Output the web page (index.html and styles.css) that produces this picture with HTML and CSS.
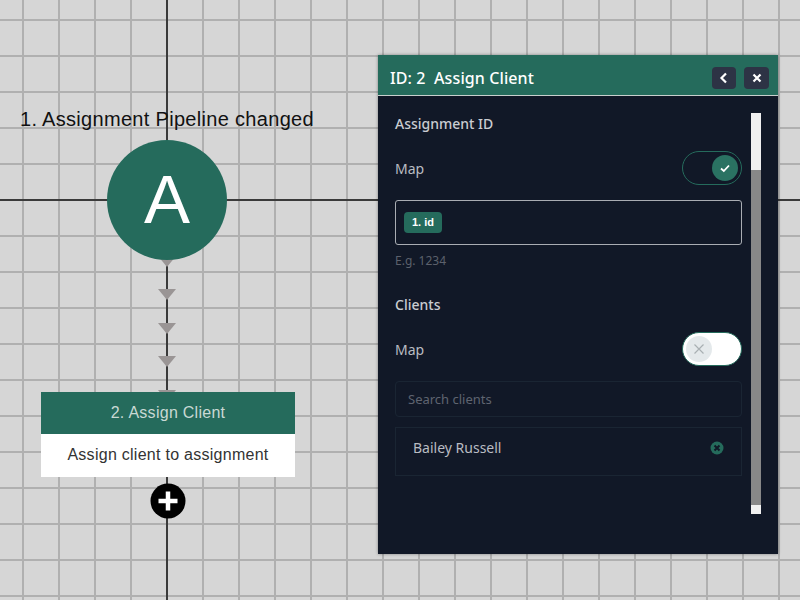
FILE: index.html
```html
<!DOCTYPE html>
<html lang="en">
  <head>
    <meta charset="UTF-8" />
    <meta name="viewport" content="width=device-width, initial-scale=1.0" />
    <title>Assign Client</title>
    <link rel="stylesheet" href="styles.css">
  </head>
  <body>
    <div class="canvas">
      <div class="axis-x"></div>
      <div class="axis-y"></div>

      <div class="arrow arrow-1"></div>
      <div class="arrow arrow-2"></div>
      <div class="arrow arrow-3"></div>
      <div class="arrow arrow-4"></div>
      <div class="arrow arrow-5"></div>

      <div class="trigger-title">1. Assignment Pipeline changed</div>
      <div class="trigger-node">A</div>

      <div class="action-node">
        <div class="action-head">2. Assign Client</div>
        <div class="action-body">Assign client to assignment</div>
      </div>

      <div class="add-node">
        <svg width="36" height="36" viewBox="0 0 36 36">
          <circle cx="18" cy="18" r="17.500" fill="#000" />
          <path d="M18 8.500v19M8.500 18h19" stroke="#fff" stroke-width="4.500" fill="none" />
        </svg>
      </div>

      <div class="panel">
        <div class="panel-head">
          <div class="panel-title">ID: 2&nbsp; Assign Client</div>
          <button class="head-btn" type="button">
            <svg width="12" height="12" viewBox="0 0 12 12">
              <path d="M8 1.500 3.500 6 8 10.500" stroke="#fff" stroke-width="2.200" fill="none" />
            </svg>
          </button>
          <button class="head-btn head-btn-close" type="button">
            <svg width="12" height="12" viewBox="0 0 12 12">
              <path d="M2.500 2.500l7 7M9.500 2.500l-7 7" stroke="#fff" stroke-width="2.200" fill="none" />
            </svg>
          </button>
        </div>

        <div class="panel-body">
          <div class="panel-form">
            <div class="section-title">Assignment ID</div>
            <div class="map-row">
              <span class="map-label">Map</span>
              <div class="toggle toggle-on">
                <span class="knob">
                  <svg width="12" height="12" viewBox="0 0 12 12">
                    <path d="M2 6.500 4.800 9 10 3.500" stroke="#fff" stroke-width="1.800" fill="none" />
                  </svg>
                </span>
              </div>
            </div>
            <div class="map-input"><span class="chip">1. id</span></div>
            <div class="hint">E.g. 1234</div>

            <div class="section-title section-clients">Clients</div>
            <div class="map-row">
              <span class="map-label">Map</span>
              <div class="toggle toggle-off">
                <span class="knob">
                  <svg width="12" height="12" viewBox="0 0 12 12">
                    <path d="M1.500 1.500l9 9M10.500 1.500l-9 9" stroke="#a9b0b3" stroke-width="1.200" fill="none" />
                  </svg>
                </span>
              </div>
            </div>
            <div class="search-box">Search clients</div>
            <div class="client-item">
              <span>Bailey Russell</span>
              <svg width="14" height="14" viewBox="0 0 14 14">
                <circle cx="7" cy="7" r="6.500" fill="#256b5c" />
                <path d="M4.500 4.500l5 5M9.500 4.500l-5 5" stroke="#111827" stroke-width="2" fill="none" />
              </svg>
            </div>
          </div>
          <div class="scrollbar">
            <div class="thumb"></div>
            <div class="track"></div>
            <div class="track-end"></div>
          </div>
        </div>
      </div>
    </div>
  </body>
</html>
```

FILE: styles.css
```css
body {
  margin: 0;
  font-family: "Liberation Sans", Arial, sans-serif;
}
.canvas {
  position: relative;
  width: 800px;
  height: 600px;
  overflow: hidden;
  background-color: #d6d6d6;
  background-image:
    linear-gradient(to right, #b0b0b0 2px, transparent 2px),
    linear-gradient(to bottom, #b0b0b0 2px, transparent 2px);
  background-size: 36px 36px;
  background-position: 22px 19px;
}
.axis-x {
  position: absolute;
  left: 0;
  top: 199px;
  width: 800px;
  height: 2px;
  background: #3a3a3a;
}
.axis-y {
  position: absolute;
  left: 166px;
  top: 0;
  width: 2px;
  height: 600px;
  background: #3a3a3a;
}
.arrow {
  position: absolute;
  left: 158px;
  width: 0;
  height: 0;
  border-left: 9.500px solid transparent;
  border-right: 9.500px solid transparent;
  border-top: 11px solid #9a9595;
}
.arrow-1 { top: 256px; }
.arrow-2 { top: 289px; }
.arrow-3 { top: 323px; }
.arrow-4 { top: 356px; }
.arrow-5 { top: 390px; }
.trigger-title {
  position: absolute;
  left: 20px;
  top: 108px;
  font-size: 20px;
  line-height: 23px;
  letter-spacing: 0.31px;
  color: #111;
  white-space: nowrap;
}
.trigger-node {
  position: absolute;
  left: 107px;
  top: 140px;
  width: 120px;
  height: 120px;
  border-radius: 50%;
  background: #256b5c;
  color: #fff;
  font-size: 69px;
  line-height: 120px;
  text-align: center;
}
.action-node {
  position: absolute;
  left: 41px;
  top: 392px;
  width: 254px;
}
.action-head {
  height: 42px;
  line-height: 41px;
  background: #256b5c;
  color: #c9d9d4;
  font-size: 16px;
  letter-spacing: 0.27px;
  text-align: center;
}
.action-body {
  height: 43px;
  line-height: 42px;
  background: #fff;
  color: #333;
  font-size: 16px;
  letter-spacing: 0.27px;
  text-align: center;
}
.add-node {
  position: absolute;
  left: 150px;
  top: 483px;
  width: 36px;
  height: 36px;
}
.panel {
  position: absolute;
  left: 378px;
  top: 55px;
  width: 400px;
  height: 499px;
  display: flex;
  flex-direction: column;
  background: #111827;
  font-family: "Noto Sans", sans-serif;
  box-shadow: 0 0 3px rgba(0, 0, 0, 0.4);
}
.panel-head {
  box-sizing: border-box;
  display: flex;
  align-items: center;
  gap: 8px;
  height: 41px;
  padding: 5px 9px 0 12px;
  background: #256b5c;
  border-bottom: 1px solid #c8cfcd;
  flex-shrink: 0;
}
.panel-title {
  flex: 1;
  color: #fff;
  font-size: 16px;
  font-weight: 500;
  letter-spacing: 0.1px;
}
.head-btn {
  display: flex;
  align-items: center;
  justify-content: center;
  width: 24px;
  height: 22px;
  padding: 0;
  border: none;
  border-radius: 4px;
  background: #2d3345;
}
.head-btn-close {
  width: 25px;
}
.panel-body {
  display: flex;
  flex: 1;
  padding: 16px 17px 0;
}
.panel-form {
  width: 347px;
}
.section-title {
  color: #c9ccd1;
  font-size: 14px;
  font-weight: 500;
  line-height: 24px;
}
.section-clients {
  margin-top: 24px;
}
.map-row {
  display: flex;
  align-items: center;
  justify-content: space-between;
  margin-top: 15px;
  height: 34px;
}
.map-label {
  color: #b9bcc2;
  font-size: 14px;
}
.toggle {
  box-sizing: border-box;
  display: flex;
  align-items: center;
  width: 60px;
  height: 34px;
  padding: 0 3px;
  border: 1px solid #256b5c;
  border-radius: 17px;
}
.toggle-on {
  justify-content: flex-end;
}
.toggle-off {
  background: #fff;
}
.knob {
  display: flex;
  align-items: center;
  justify-content: center;
  width: 26px;
  height: 26px;
  border-radius: 50%;
}
.toggle-on .knob {
  background: #2a7262;
}
.toggle-off .knob {
  background: #e4e9eb;
}
.map-input {
  box-sizing: border-box;
  display: flex;
  align-items: center;
  height: 45px;
  margin-top: 15px;
  padding: 0 8px;
  border: 1px solid #a9adb3;
  border-radius: 3px;
}
.chip {
  padding: 0 8px;
  height: 21px;
  line-height: 21px;
  border-radius: 4px;
  background: #256b5c;
  color: #fff;
  font-family: "Liberation Sans", Arial, sans-serif;
  font-size: 11px;
  font-weight: 700;
}
.hint {
  margin-top: 7px;
  color: #5c616c;
  font-size: 12px;
  line-height: 17px;
}
.search-box {
  box-sizing: border-box;
  height: 36px;
  margin-top: 15px;
  padding: 0 12px;
  line-height: 34px;
  border: 1px solid #1a2533;
  border-radius: 4px;
  color: #5f6470;
  font-size: 13px;
}
.client-item {
  box-sizing: border-box;
  display: flex;
  justify-content: space-between;
  height: 49px;
  margin-top: 10px;
  padding: 10px 17px;
  border: 1px solid #1a2533;
  color: #b9bcc2;
  font-size: 14px;
}
.client-item svg {
  margin-top: 3px;
}
.scrollbar {
  display: flex;
  flex-direction: column;
  width: 10px;
  height: 401px;
  margin: 1px 0 0 9px;
}
.thumb {
  height: 57px;
  background: #f0f0f0;
}
.track {
  flex: 1;
  background: #888;
}
.track-end {
  height: 9px;
  background: #f0f0f0;
}
```
